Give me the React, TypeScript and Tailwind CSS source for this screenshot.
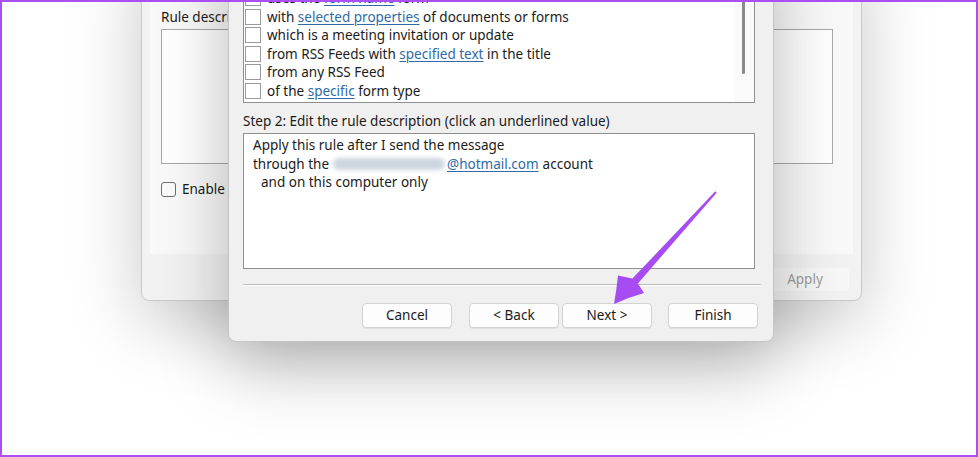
import type { ReactNode } from "react";

const link = "text-[#2f6aa6] underline underline-offset-2 decoration-[#2f6aa6]";

type Row = { key: string; content: ReactNode };

const ROWS: Row[] = [
  { key: "form", content: <>uses the <span className={link}>form name</span> form</> },
  { key: "props", content: <>with <span className={link}>selected properties</span> of documents or forms</> },
  { key: "meeting", content: <>which is a meeting invitation or update</> },
  { key: "rss", content: <>from RSS Feeds with <span className={link}>specified text</span> in the title</> },
  { key: "anyrss", content: <>from any RSS Feed</> },
  { key: "type", content: <>of the <span className={link}>specific</span> form type</> },
];

function Box() {
  return <span className="h-[16px] w-[16px] shrink-0 border border-[#9a9a9a] bg-white" />;
}

function Btn({ children, className = "" }: { children: ReactNode; className?: string }) {
  return (
    <button
      type="button"
      className={`flex h-[25px] w-[90px] items-center justify-center rounded-[4px] border border-[#d3d3d3] bg-[#fdfdfd] text-[13.5px] text-[#1b1b1b] shadow-[0_1px_0_rgba(0,0,0,0.06)] ${className}`}
    >
      {children}
    </button>
  );
}

function BackDialog() {
  return (
    <div className="absolute left-[141px] top-[-60px] flex h-[361px] w-[721px] flex-col rounded-[8px] border border-[#c9c9c9] bg-[#f2f2f2] shadow-[0_22px_70px_rgba(0,0,0,0.22)]">
      <div className="mx-[8px] flex h-[313px] flex-col bg-[#f9f9f9] px-[11px] pt-[67px]">
        <div className="h-[18px] text-[13.5px] leading-[18px] text-[#1b1b1b]">Rule description (click an underlined value to edit):</div>
        <div className="mt-[3px] h-[135px] w-[672px] border border-[#a8a8a8] bg-white" />
        <div className="mt-[15px] flex items-center gap-[6px] text-[13.5px] text-[#1b1b1b]">
          <span className="h-[15px] w-[15px] rounded-[3px] border border-[#6f6f6f] bg-[#fbfbfb]" />
          Enable this rule
        </div>
      </div>
      <div className="flex justify-end pr-[12px] pt-[14px]">
        <div className="flex h-[23px] w-[88px] items-center justify-center rounded-[3px] bg-[#f7f7f7] text-[13.5px] text-[#9c9c9c]">
          Apply
        </div>
      </div>
    </div>
  );
}

function FrontDialog() {
  return (
    <div className="absolute left-[228px] top-[-60px] flex h-[402px] w-[546px] flex-col rounded-[8px] border border-[#c4c4c4] bg-[#f0f0f0] px-[14px] shadow-[0_24px_70px_rgba(0,0,0,0.28)]">
      <div className="relative mt-[10px] flex h-[152px] w-[512px] flex-col justify-end overflow-hidden border border-[#8f8f8f] bg-white pb-[2px]">
        {ROWS.map((r) => (
          <div key={r.key} className="flex h-[18.5px] items-center gap-[6px] pl-[1px] text-[13.5px] leading-[18px] text-[#1b1b1b]">
            <Box />
            <span className="whitespace-nowrap">{r.content}</span>
          </div>
        ))}
        <div className="absolute right-0 top-0 h-full w-[20px] bg-[#fafafa]">
          <div className="ml-[8px] mt-[20px] h-[102px] w-[3px] rounded-full bg-[#8a8a8a]" />
        </div>
      </div>

      <div className="mt-[9px] h-[18px] text-[13.5px] leading-[18px] text-[#1b1b1b]">
        Step 2: Edit the rule description (click an underlined value)
      </div>
      <div className="mt-[3px] flex h-[136px] w-[512px] flex-col border border-[#8f8f8f] bg-white pl-[9px] pt-[2px] text-[13.5px] leading-[18.5px] text-[#1b1b1b]">
        <div>Apply this rule after I send the message</div>
        <div className="flex items-center">
          through the
          <span className="ml-[4px] mr-[2px] inline-block h-[12px] w-[112px] rounded-full bg-[#cdd6e0] blur-[2px]" />
          <span className={link}>@hotmail.com</span>
          <span className="ml-[4px]">account</span>
        </div>
        <div className="pl-[8px]">and on this computer only</div>
      </div>

      <div className="mt-[15px] h-[2px] w-[518px] border-t border-[#bcbcbc] bg-white" />

      <div className="mt-[17px] flex justify-end pr-[1px]">
        <Btn>Cancel</Btn>
        <Btn className="ml-[17px]">&lt; Back</Btn>
        <Btn className="ml-[3px]">Next &gt;</Btn>
        <Btn className="ml-[16px]">Finish</Btn>
      </div>
    </div>
  );
}

function Arrow() {
  return (
    <svg className="pointer-events-none absolute left-0 top-0" width="978" height="457" viewBox="0 0 978 457">
      <path
        d="M715.3 191.3 L632.4 278.6 L618 275.5 Q616.5 290 614 304 Q628 297.5 644 293 L637.9 283.4 L716.7 192.7 Z"
        fill="#a64cf2"
      />
    </svg>
  );
}

export default function App() {
  return (
    <div className="relative h-[457px] w-[978px] overflow-hidden bg-white font-['Noto_Sans',sans-serif]">
      <BackDialog />
      <FrontDialog />
      <Arrow />
      <div className="pointer-events-none absolute inset-0 border-2 border-[#ab4ff5]" />
    </div>
  );
}
